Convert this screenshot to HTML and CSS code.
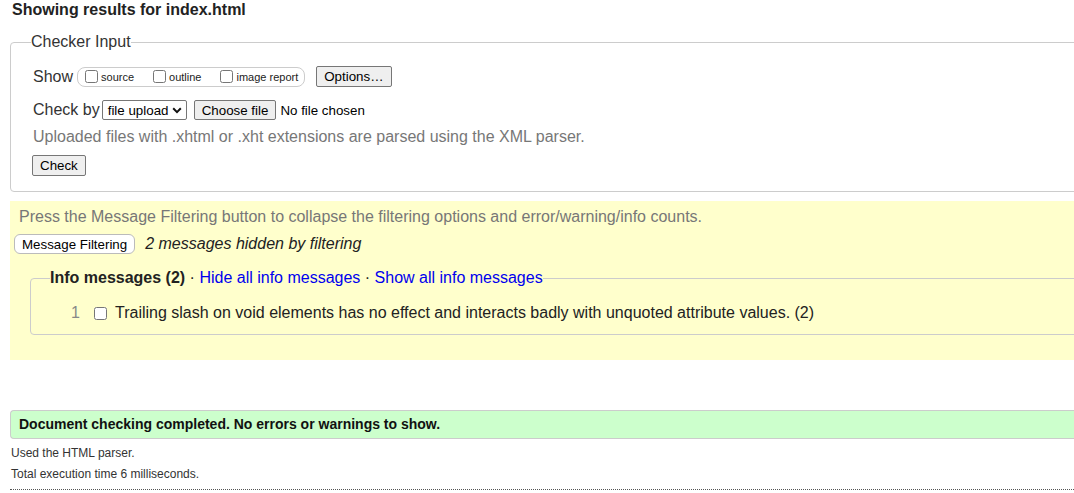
FILE: index.html
```html
<!DOCTYPE html>
<html>
<head>
<meta charset="utf-8">
<title>Nu Html Checker</title>
<link rel="stylesheet" href="styles.css">
</head>
<body>
<div class="page">
  <h2 class="title">Showing results for index.html</h2>

  <fieldset class="checker">
    <legend>Checker Input</legend>
    <div class="row row-show">
      <span class="lbl">Show</span>
      <span class="pill">
        <label class="opt"><input type="checkbox">source</label>
        <label class="opt"><input type="checkbox">outline</label>
        <label class="opt"><input type="checkbox">image report</label>
      </span>
      <button class="btn btn-options">Options…</button>
    </div>
    <div class="row row-by">
      <span class="lbl">Check by</span>
      <span class="select">file upload<svg class="chev" width="10" height="7" viewBox="0 0 10 7"><path d="M1.2 1.3 5 5.1 8.8 1.3" fill="none" stroke="#111" stroke-width="2"/></svg></span>
      <button class="btn btn-file">Choose file</button>
      <span class="nofile">No file chosen</span>
    </div>
    <p class="hint">Uploaded files with .xhtml or .xht extensions are parsed using the XML parser.</p>
    <div class="row row-check">
      <button class="btn">Check</button>
    </div>
  </fieldset>

  <div class="filters">
    <p class="press">Press the Message Filtering button to collapse the filtering options and error/warning/info counts.</p>
    <div class="filter-row">
      <button class="btn-filter">Message Filtering</button>
      <em class="hidden-count">2 messages hidden by filtering</em>
    </div>
    <fieldset class="info">
      <legend><strong>Info messages (2)</strong> · <a href="#">Hide all info messages</a> · <a href="#">Show all info messages</a></legend>
      <div class="msg">
        <span class="num">1</span>
        <input type="checkbox" class="msg-check">
        <span class="msg-text">Trailing slash on void elements has no effect and interacts badly with unquoted attribute values. (2)</span>
      </div>
    </fieldset>
  </div>

  <p class="success">Document checking completed. No errors or warnings to show.</p>
  <p class="meta">Used the HTML parser.</p>
  <p class="meta">Total execution time 6 milliseconds.</p>
  <hr class="dots">
</div>
</body>
</html>
```

FILE: styles.css
```css
html {
  overflow: hidden;
}

body {
  margin: 0;
  font-family: "Liberation Sans", Arial, sans-serif;
  font-size: 16px;
  color: #222;
  background: #fff;
}

.page {
  width: 1120px;
}

.title {
  font-size: 16px;
  font-weight: bold;
  line-height: 18px;
  margin: 1px 0 0 12px;
}

.checker {
  margin: 14px 0 0 10px;
  border: 1px solid #ccc;
  border-radius: 4px;
  padding: 0 22px 15px;
  min-width: 0;
}

.checker legend {
  padding: 0;
  margin-left: -2px;
  line-height: 18px;
  color: #333;
}

.row {
  display: flex;
  align-items: center;
}

.row-show {
  margin-top: 15px;
  height: 21px;
}

.lbl {
  color: #333;
}

.pill {
  display: inline-flex;
  align-items: center;
  height: 18px;
  margin-left: 4px;
  padding: 0 6px 0 3px;
  border: 1px solid #ccc;
  border-radius: 8px;
}

.opt {
  display: inline-flex;
  align-items: center;
  font-size: 11px;
  margin-right: 15px;
}

.opt:last-child {
  margin-right: 0;
}

.opt input {
  margin: 0 3px 0 4px;
  width: 13px;
  height: 13px;
}

.btn {
  font-family: "Liberation Sans", Arial, sans-serif;
  font-size: 13.33px;
  color: #000;
  background: #efefef;
  border: 1px solid #767676;
  border-radius: 2px;
  padding: 1px 7px;
  height: 21px;
  line-height: 17px;
}

.btn-options {
  margin-left: 11px;
}

.row-by {
  margin-top: 13px;
  height: 20px;
}

.select {
  display: inline-flex;
  align-items: center;
  box-sizing: border-box;
  height: 20px;
  width: 85px;
  margin-left: 2px;
  padding: 0 4px 0 5px;
  border: 1px solid #767676;
  border-radius: 2px;
  font-size: 13.33px;
  color: #000;
  justify-content: space-between;
}

.chev {
  display: block;
}

.btn-file {
  margin-left: 7px;
  height: 20px;
}

.nofile {
  margin-left: 4px;
  font-size: 13.33px;
  color: #000;
}

.hint {
  margin: 8px 0 0;
  line-height: 18px;
  color: #777;
}

.row-check {
  margin-top: 9px;
  margin-left: -1px;
}

.filters {
  margin: 9px 0 0 10px;
  background: #ffffcc;
  padding: 7px 0 25px 4px;
}

.press {
  margin: 0 0 0 5px;
  line-height: 18px;
  color: #777;
}

.filter-row {
  display: flex;
  align-items: center;
  margin-top: 8px;
  height: 20px;
}

.btn-filter {
  font-family: "Liberation Sans", Arial, sans-serif;
  font-size: 13.33px;
  color: #000;
  background: #fff;
  border: 1px solid #bbb;
  border-radius: 6px;
  height: 20px;
  padding: 0 7px;
}

.hidden-count {
  margin-left: 10px;
}

.info {
  margin: 15px 0 0 16px;
  border: 1px solid #ccc;
  border-radius: 4px;
  padding: 0 19px 12px;
  min-width: 0;
}

.info legend {
  padding: 0;
  line-height: 18px;
}

.info a {
  color: #0000ee;
  text-decoration: none;
}

.msg {
  display: flex;
  align-items: center;
  margin-top: 17px;
  line-height: 18px;
}

.num {
  width: 30px;
  text-align: right;
  color: #888;
}

.msg-check {
  margin: 0 8px 0 14px;
  width: 13px;
  height: 13px;
}

.success {
  margin: 50px 0 0 10px;
  background: #ccffcc;
  border: 1px solid #ccc;
  border-right: none;
  border-radius: 4px 0 0 4px;
  padding: 6px 8px;
  font-size: 14px;
  font-weight: bold;
  line-height: 15px;
  color: #111;
}

.meta {
  margin: 7px 0 0 11px;
  font-size: 12px;
  line-height: 14px;
  color: #333;
}

.dots {
  margin: 8px 0 0 10px;
  border: none;
  border-top: 1px dotted #555;
  height: 0;
}
```
